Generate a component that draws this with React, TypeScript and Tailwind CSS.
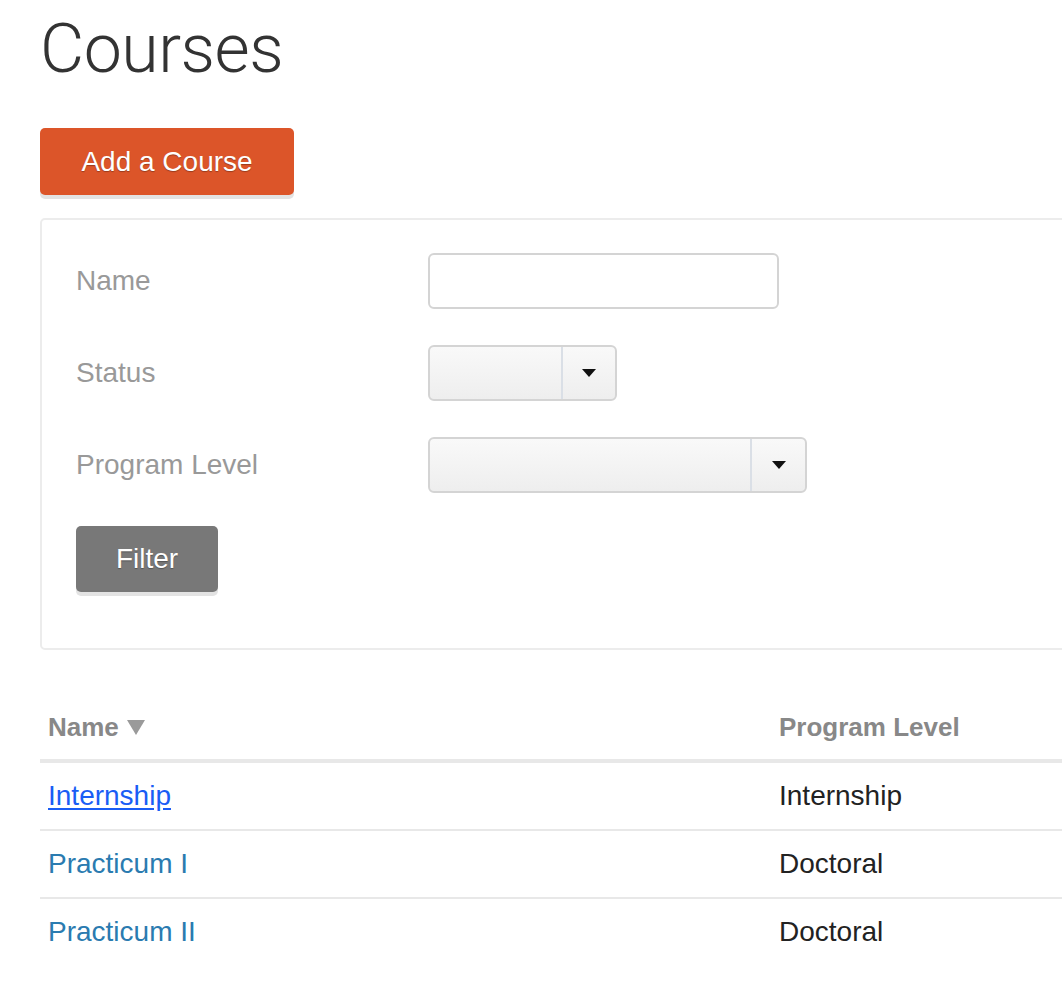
import React from 'react';

const font = { fontFamily: '"Liberation Sans", Arial, sans-serif' };

const Caret = () => (
  <svg width="14" height="8" viewBox="0 0 14 8" className="block">
    <path d="M0 0 L14 0 L7 8 Z" fill="#111" />
  </svg>
);

const SelectBox = ({ width, splitAt }: { width: string; splitAt: string }) => (
  <div
    className={`flex h-[56px] ${width} rounded-[6px] border-2 border-[#d4d4d4] bg-gradient-to-b from-[#f9f9f9] to-[#eeeeee] overflow-hidden`}
  >
    <div className={`${splitAt} h-full border-r-2 border-[#dadfe6]`} />
    <div className="flex-1 flex items-center justify-center">
      <Caret />
    </div>
  </div>
);

const rows = [
  { name: 'Internship', level: 'Internship', active: true },
  { name: 'Practicum I', level: 'Doctoral', active: false },
  { name: 'Practicum II', level: 'Doctoral', active: false },
];

export default function App() {
  return (
    <div className="w-full min-h-screen bg-white overflow-hidden" style={font}>
      <div className="w-[1100px] pl-10">
        <h1 className="mt-[15px] text-[68px] leading-none font-light text-[#333] tracking-[-0.5px]" style={{ fontFamily: 'Roboto, "Liberation Sans", sans-serif' }}>
          Courses
        </h1>

        <button className="mt-[45px] h-[67px] w-[254px] flex items-center justify-center rounded-[5px] bg-[#dc5529] text-white text-[28px] shadow-[0_4px_0_#e3e3e3] [text-shadow:0_1px_1px_rgba(0,0,0,0.3)]">
          Add a Course
        </button>

        <div className="mt-[23px] border-2 border-[#ececec] rounded-[5px] pl-[34px] pt-[33px] pb-[56px]">
          <div className="flex items-center">
            <div className="w-[352px] text-[28px] text-[#999]">Name</div>
            <div className="h-[56px] w-[351px] rounded-[6px] border-2 border-[#d4d4d4] bg-white" />
          </div>
          <div className="flex items-center mt-[36px]">
            <div className="w-[352px] text-[28px] text-[#999]">Status</div>
            <SelectBox width="w-[189px]" splitAt="w-[133px]" />
          </div>
          <div className="flex items-center mt-[36px]">
            <div className="w-[352px] text-[28px] text-[#999]">Program Level</div>
            <SelectBox width="w-[379px]" splitAt="w-[322px]" />
          </div>
          <button className="mt-[33px] h-[66px] w-[142px] flex items-center justify-center rounded-[5px] bg-[#787878] text-white text-[28px] shadow-[0_4px_0_#e3e3e3] [text-shadow:0_1px_1px_rgba(0,0,0,0.3)]">
            Filter
          </button>
        </div>

        <table className="mt-[44px] w-full border-collapse">
          <thead>
            <tr className="border-b-4 border-[#e8e8e8]">
              <th className="w-[731px] text-left font-bold text-[26px] text-[#888] px-2 pt-4 pb-[15px] leading-[34px]">
                <span className="inline-flex items-center gap-[8px]">
                  Name
                  <svg width="18" height="15" viewBox="0 0 18 15">
                    <path d="M0 0 L18 0 L9 15 Z" fill="#9a9a9a" />
                  </svg>
                </span>
              </th>
              <th className="text-left font-bold text-[26px] text-[#888] px-2 pt-4 pb-[15px] leading-[34px]">Program Level</th>
            </tr>
          </thead>
          <tbody className="text-[28px]">
            {rows.map((r, i) => (
              <tr key={r.name} className={i > 0 ? 'border-t-2 border-[#e8e8e8]' : ''}>
                <td className="px-2 py-4 leading-[34px]">
                  <a
                    href="#"
                    className={r.active ? 'text-[#1a5df5] underline underline-offset-[3px]' : 'text-[#2a7bb0] no-underline'}
                  >
                    {r.name}
                  </a>
                </td>
                <td className="px-2 py-4 leading-[34px] text-[#222]">{r.level}</td>
              </tr>
            ))}
          </tbody>
        </table>
      </div>
    </div>
  );
}
